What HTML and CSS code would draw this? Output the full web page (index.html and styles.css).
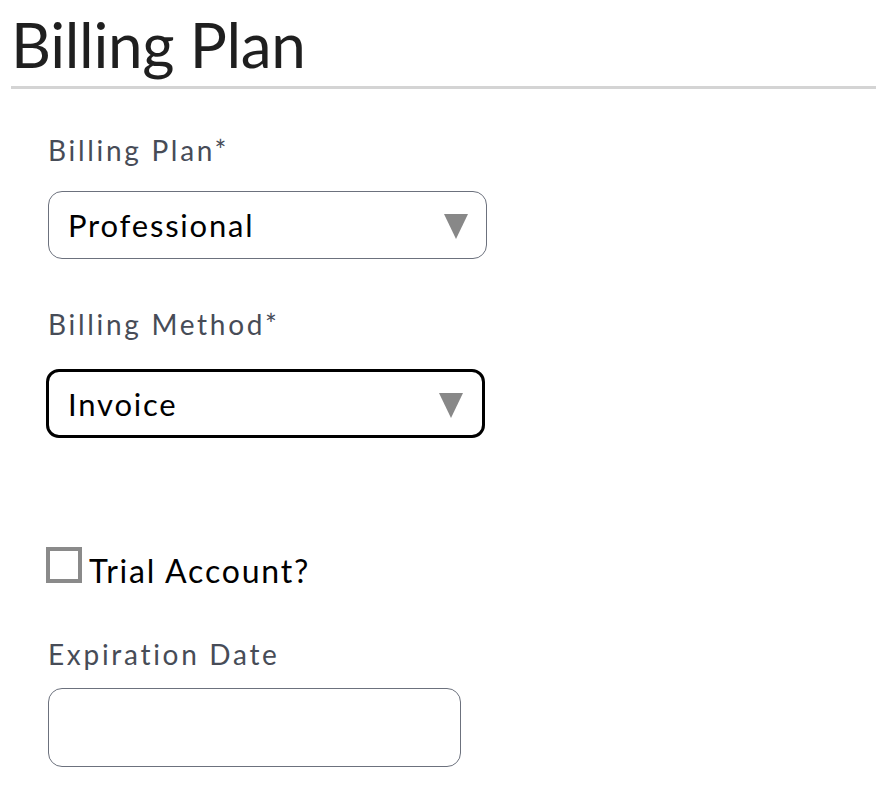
FILE: index.html
```html
<!DOCTYPE html>
<html lang="en">
<head>
<meta charset="utf-8">
<title>Billing Plan</title>
<link rel="stylesheet" href="styles.css">
</head>
<body>
<header class="page-head">
  <h1 class="page-title">Billing Plan</h1>
</header>
<form class="billing-form">
  <div class="field field-plan">
    <label class="field-label" for="plan">Billing Plan*</label>
    <div class="select-wrap">
      <select id="plan" class="select">
        <option>Professional</option>
      </select>
      <svg class="select-arrow" width="24" height="25" viewBox="0 0 24 25" aria-hidden="true"><polygon points="0,0 24,0 12,25" fill="#888888"/></svg>
    </div>
  </div>
  <div class="field field-method">
    <label class="field-label" for="method">Billing Method*</label>
    <div class="select-wrap is-focused">
      <select id="method" class="select">
        <option>Invoice</option>
      </select>
      <svg class="select-arrow" width="24" height="25" viewBox="0 0 24 25" aria-hidden="true"><polygon points="0,0 24,0 12,25" fill="#888888"/></svg>
    </div>
  </div>
  <label class="check-row">
    <span class="check-box"></span>
    <span class="check-text">Trial Account?</span>
  </label>
  <div class="field field-exp">
    <label class="field-label" for="exp">Expiration Date</label>
    <input id="exp" class="text-input" type="text">
  </div>
</form>
</body>
</html>
```

FILE: styles.css
```css
html, body {
  margin: 0;
  padding: 0;
  background: #ffffff;
}

body {
  font-family: Lato, "Noto Sans", sans-serif;
  color: #111111;
}

.page-head {
  margin-left: 11px;
  padding-top: 7px;
  padding-bottom: 5px;
  border-bottom: 3px solid #d4d4d4;
}

.page-title {
  margin: 0;
  font-size: 62px;
  line-height: 74px;
  font-weight: 400;
  color: #1f1f1f;
  letter-spacing: -0.3px;
}

.billing-form {
  padding-left: 48px;
  padding-top: 44px;
  display: flex;
  flex-direction: column;
  align-items: flex-start;
}

.field {
  display: flex;
  flex-direction: column;
  align-items: flex-start;
}

.field-label {
  font-size: 28px;
  line-height: 34px;
  color: #474c57;
  letter-spacing: 2.7px;
}

.field-plan .field-label { margin-bottom: 24px; }
.field-method { margin-top: 48px; }
.field-method .field-label { margin-bottom: 28px; }

.select-wrap {
  position: relative;
  width: 439px;
  height: 68px;
  box-sizing: border-box;
  border: 1.5px solid #6c717d;
  border-radius: 14px;
  background: #ffffff;
}

.select-wrap.is-focused {
  height: 69px;
  margin-left: -2px;
  border: 3px solid #000000;
  border-radius: 13px;
}

.select {
  appearance: none;
  -webkit-appearance: none;
  width: 100%;
  height: 100%;
  border: 0;
  outline: none;
  background: transparent;
  margin: 0;
  padding: 0 60px 0 19px;
  font-family: Lato, "Noto Sans", sans-serif;
  font-size: 31px;
  letter-spacing: 1.8px;
  color: #000000;
}

.select-arrow {
  position: absolute;
  right: 18px;
  top: 50%;
  margin-top: -11px;
  pointer-events: none;
}

.is-focused .select-arrow {
  right: 19px;
}

.check-row {
  margin-top: 109px;
  display: flex;
  align-items: baseline;
  gap: 7px;
}

.check-box {
  display: block;
  width: 36px;
  height: 36px;
  box-sizing: border-box;
  border: 4px solid #8a8a8a;
  margin-left: -2px;
}

.check-text {
  font-size: 32px;
  line-height: 38px;
  letter-spacing: 1.8px;
  color: #000000;
}

.field-exp {
  margin-top: 47px;
}

.field-exp .field-label { margin-bottom: 17px; }

.text-input {
  width: 413px;
  height: 79px;
  box-sizing: border-box;
  border: 1.5px solid #6c717d;
  border-radius: 14px;
  background: #ffffff;
  margin: 0;
  padding: 0 19px;
  font-family: Lato, "Noto Sans", sans-serif;
  font-size: 31px;
  outline: none;
}
```
